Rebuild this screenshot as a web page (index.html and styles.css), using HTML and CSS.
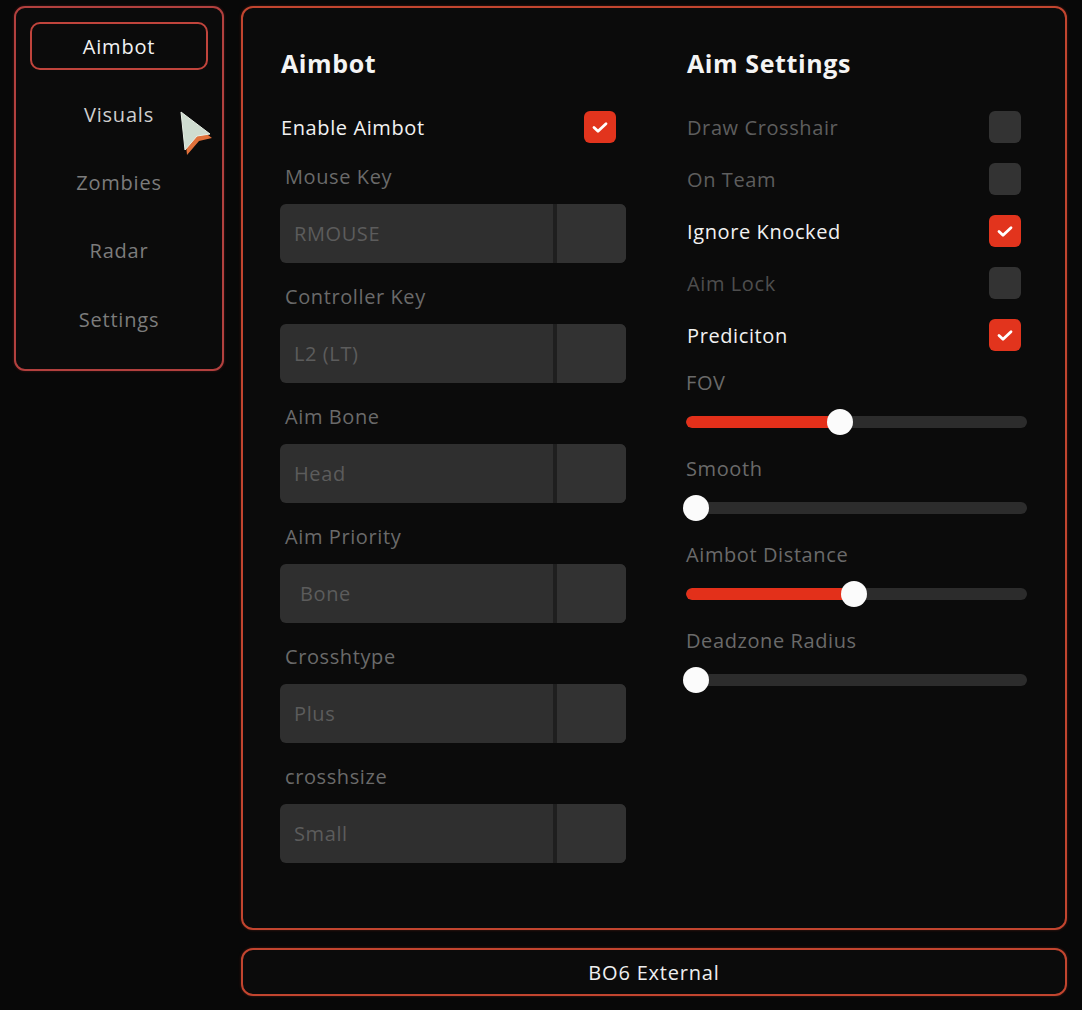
FILE: index.html
```html
<!DOCTYPE html>
<html>
<head>
<meta charset="utf-8">
<link rel="stylesheet" href="styles.css">
</head>
<body>
<div class="app">
  <nav class="sidebar">
    <div class="nav-item active">Aimbot</div>
    <div class="nav-item hover">Visuals</div>
    <div class="nav-item">Zombies</div>
    <div class="nav-item">Radar</div>
    <div class="nav-item">Settings</div>
  </nav>
  <div class="main-col">
    <section class="panel">
      <div class="column left">
        <h2 class="title">Aimbot</h2>
        <div class="check-row on">
          <span class="check-label">Enable Aimbot</span>
          <span class="checkbox checked"><svg viewBox="0 0 32 32"><path d="M10 16.5l4 3.8 8-7.6" /></svg></span>
        </div>
        <div class="field">
          <div class="field-label">Mouse Key</div>
          <div class="combo"><span class="combo-value">RMOUSE</span><span class="combo-btn"></span></div>
        </div>
        <div class="field">
          <div class="field-label">Controller Key</div>
          <div class="combo"><span class="combo-value">L2 (LT)</span><span class="combo-btn"></span></div>
        </div>
        <div class="field">
          <div class="field-label">Aim Bone</div>
          <div class="combo"><span class="combo-value">Head</span><span class="combo-btn"></span></div>
        </div>
        <div class="field">
          <div class="field-label">Aim Priority</div>
          <div class="combo"><span class="combo-value indent">Bone</span><span class="combo-btn"></span></div>
        </div>
        <div class="field">
          <div class="field-label">Crosshtype</div>
          <div class="combo"><span class="combo-value">Plus</span><span class="combo-btn"></span></div>
        </div>
        <div class="field">
          <div class="field-label">crosshsize</div>
          <div class="combo"><span class="combo-value">Small</span><span class="combo-btn"></span></div>
        </div>
      </div>
      <div class="column right">
        <h2 class="title">Aim Settings</h2>
        <div class="check-row">
          <span class="check-label">Draw Crosshair</span>
          <span class="checkbox"></span>
        </div>
        <div class="check-row">
          <span class="check-label">On Team</span>
          <span class="checkbox"></span>
        </div>
        <div class="check-row on">
          <span class="check-label">Ignore Knocked</span>
          <span class="checkbox checked"><svg viewBox="0 0 32 32"><path d="M10 16.5l4 3.8 8-7.6" /></svg></span>
        </div>
        <div class="check-row dim">
          <span class="check-label">Aim Lock</span>
          <span class="checkbox"></span>
        </div>
        <div class="check-row on">
          <span class="check-label">Prediciton</span>
          <span class="checkbox checked"><svg viewBox="0 0 32 32"><path d="M10 16.5l4 3.8 8-7.6" /></svg></span>
        </div>
        <div class="slider-group">
          <div class="field-label">FOV</div>
          <div class="slider"><div class="track"><div class="fill" style="width:154px"></div></div><div class="knob" style="left:141px"></div></div>
        </div>
        <div class="slider-group">
          <div class="field-label">Smooth</div>
          <div class="slider"><div class="track"><div class="fill" style="width:0px"></div></div><div class="knob" style="left:-3px"></div></div>
        </div>
        <div class="slider-group">
          <div class="field-label">Aimbot Distance</div>
          <div class="slider"><div class="track"><div class="fill" style="width:168px"></div></div><div class="knob" style="left:155px"></div></div>
        </div>
        <div class="slider-group">
          <div class="field-label">Deadzone Radius</div>
          <div class="slider"><div class="track"><div class="fill" style="width:0px"></div></div><div class="knob" style="left:-3px"></div></div>
        </div>
      </div>
    </section>
    <footer class="statusbar">BO6 External</footer>
  </div>
</div>
<svg class="cursor" width="40" height="50" viewBox="0 0 40 50">
  <path d="M5 8 L34 30 L21 33 L9 47 Z" fill="#e0703a" />
  <path d="M3 4 L32 26 L19 28 L7 42 Z" fill="#cfdcd0" stroke="#e8efe6" stroke-width="1" />
</svg>
</body>
</html>
```
FILE: styles.css
```css
* { box-sizing: border-box; }
html, body {
  margin: 0;
  padding: 0;
  background: #080808;
  font-family: "Open Sans", Lato, "Liberation Sans", sans-serif;
  color: #f0f0f0;
}
.app {
  display: flex;
  align-items: flex-start;
  gap: 17px;
  padding: 6px 15px 0 14px;
  width: 1082px;
  height: 1010px;
}
.sidebar {
  width: 210px;
  border: 2px solid #b2403e;
  border-radius: 11px;
  background: #0b0b0b;
  padding: 14px 14px 26px 14px;
  display: flex;
  flex-direction: column;
  gap: 20.3px;
  box-shadow: 0 0 3px rgba(180, 50, 50, 0.35);
}
.nav-item {
  height: 48px;
  display: flex;
  align-items: center;
  justify-content: center;
  font-size: 20px;
  letter-spacing: 0.8px;
  color: #7c7c7c;
  border-radius: 10px;
  border: 2px solid transparent;
}
.nav-item.active {
  color: #f2f2f2;
  border-color: #c0443c;
}
.nav-item.hover { color: #cfcfcf; }
.main-col {
  flex: 1;
  display: flex;
  flex-direction: column;
  gap: 18px;
}
.panel {
  height: 924px;
  border: 2px solid #c2452f;
  border-radius: 12px;
  background: #0b0b0b;
  padding: 40px 0 0 37px;
  display: flex;
  gap: 60px;
  box-shadow: 0 0 3px rgba(190, 60, 40, 0.35);
}
.column { display: flex; flex-direction: column; }
.column.left { width: 346px; }
.column.right { width: 341px; }
.title {
  margin: 0 0 33px 1px;
  font-size: 25px;
  line-height: 30px;
  font-weight: 700;
  color: #f4f4f4;
  letter-spacing: 0.6px;
}
.check-row {
  height: 32px;
  display: flex;
  align-items: center;
  justify-content: space-between;
  margin-bottom: 20px;
  font-size: 20px;
  letter-spacing: 0.6px;
  color: #5e5e5e;
  padding-left: 1px;
}
.column.left .check-row { padding-right: 10px; margin-bottom: 22px; }
.column.right .check-row { padding-right: 6px; }
.check-row.on { color: #f2f2f2; font-weight: 500; }
.check-row.dim { color: #4e4e4e; }
.checkbox {
  width: 32px;
  height: 32px;
  border-radius: 6px;
  background: #333;
  display: block;
}
.checkbox.checked { background: #e2341d; }
.checkbox svg { width: 32px; height: 32px; display: block; }
.checkbox path {
  fill: none;
  stroke: #fff;
  stroke-width: 2.8;
  stroke-linecap: round;
  stroke-linejoin: round;
}
.field { margin-bottom: 22px; }
.field-label {
  font-size: 20px;
  letter-spacing: 0.6px;
  line-height: 24px;
  color: #6a6a6a;
  padding-left: 5px;
}
.column.right .field-label { padding-left: 0; }
.combo {
  margin-top: 15px;
  height: 59px;
  display: flex;
  border-radius: 6px;
  background: #2f2f2f;
  overflow: hidden;
}
.combo-value {
  flex: 1;
  display: flex;
  align-items: center;
  padding-left: 14px;
  padding-bottom: 1px;
  font-size: 20px;
  letter-spacing: 0.6px;
  color: #5c5c5c;
  border-right: 4px solid #1f1f1f;
}
.combo-value.indent { padding-left: 20px; }
.combo-btn {
  width: 69px;
  background: #323232;
}
.slider-group { margin-bottom: 22px; }
.slider {
  position: relative;
  height: 26px;
  margin-top: 14px;
  display: flex;
  align-items: center;
}
.track {
  width: 341px;
  height: 12px;
  border-radius: 6px;
  background: #2c2c2c;
  overflow: hidden;
}
.fill {
  height: 12px;
  background: #e3301a;
  border-radius: 6px 0 0 6px;
}
.knob {
  position: absolute;
  top: 0;
  width: 26px;
  height: 26px;
  border-radius: 50%;
  background: #fbfbfb;
}
.statusbar {
  height: 48px;
  border: 2px solid #c2452f;
  border-radius: 12px;
  background: #0b0b0b;
  display: flex;
  align-items: center;
  justify-content: center;
  font-size: 20px;
  letter-spacing: 0.8px;
  color: #efefef;
  box-shadow: 0 0 3px rgba(190, 60, 40, 0.35);
}
.cursor {
  position: absolute;
  left: 178px;
  top: 108px;
}
```
